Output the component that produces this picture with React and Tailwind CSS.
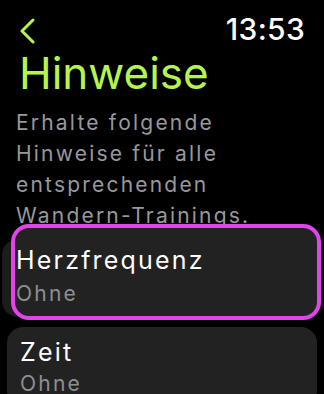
export default function App() {
  return (
    <div
      className="w-[324px] h-[394px] overflow-hidden bg-black text-white"
      style={{ fontFamily: "Inter, 'Noto Sans', sans-serif" }}
    >
      <div className="flex items-start justify-between pl-[19px] pr-[19px] pt-[11px] h-[47px]">
        <svg width="16" height="26" viewBox="0 0 16 26" className="mt-[7px]">
          <path d="M14 2 L3 13 L14 24" fill="none" stroke="#b5f44f" strokeWidth="3" strokeLinecap="round" strokeLinejoin="round" />
        </svg>
        <div className="text-[30px] leading-[36px] font-medium tracking-[0.3px] text-white">13:53</div>
      </div>
      <div className="mt-[4px] pl-[19px] text-[44px] leading-[44px] text-[#b5f44f]">Hinweise</div>
      <div className="mt-[12px] pl-[16px] text-[21px] leading-[31px] tracking-[2.2px] text-[#98989d] whitespace-nowrap">
        Erhalte folgende
        <br />
        Hinweise für alle
        <br />
        entsprechenden
        <br />
        Wandern-Trainings.
      </div>
      <div className="mt-[8px] flex flex-col gap-[10px]">
        <div className="relative ml-[2px] mr-[8px] h-[78px] rounded-[16px] bg-[#1c1c1c]">
          <div className="absolute left-[9px] top-[-15px] w-[310px] h-[96px] rounded-[18px] border-[4px] border-[#e244eb] bg-[#222222] pl-[1px] pt-[17px]">
            <div className="text-[25px] leading-[30px] tracking-[2.2px] text-white">Herzfrequenz</div>
            <div className="mt-[6px] text-[21px] leading-[26px] tracking-[2.2px] text-[#8e8e93]">Ohne</div>
          </div>
        </div>
        <div className="mx-[7px] h-[80px] rounded-[16px] bg-[#222222] pl-[13px] pt-[10px]">
          <div className="text-[25px] leading-[30px] tracking-[2.2px] text-white">Zeit</div>
          <div className="mt-[4px] text-[21px] leading-[26px] tracking-[2.2px] text-[#8e8e93]">Ohne</div>
        </div>
      </div>
    </div>
  );
}
